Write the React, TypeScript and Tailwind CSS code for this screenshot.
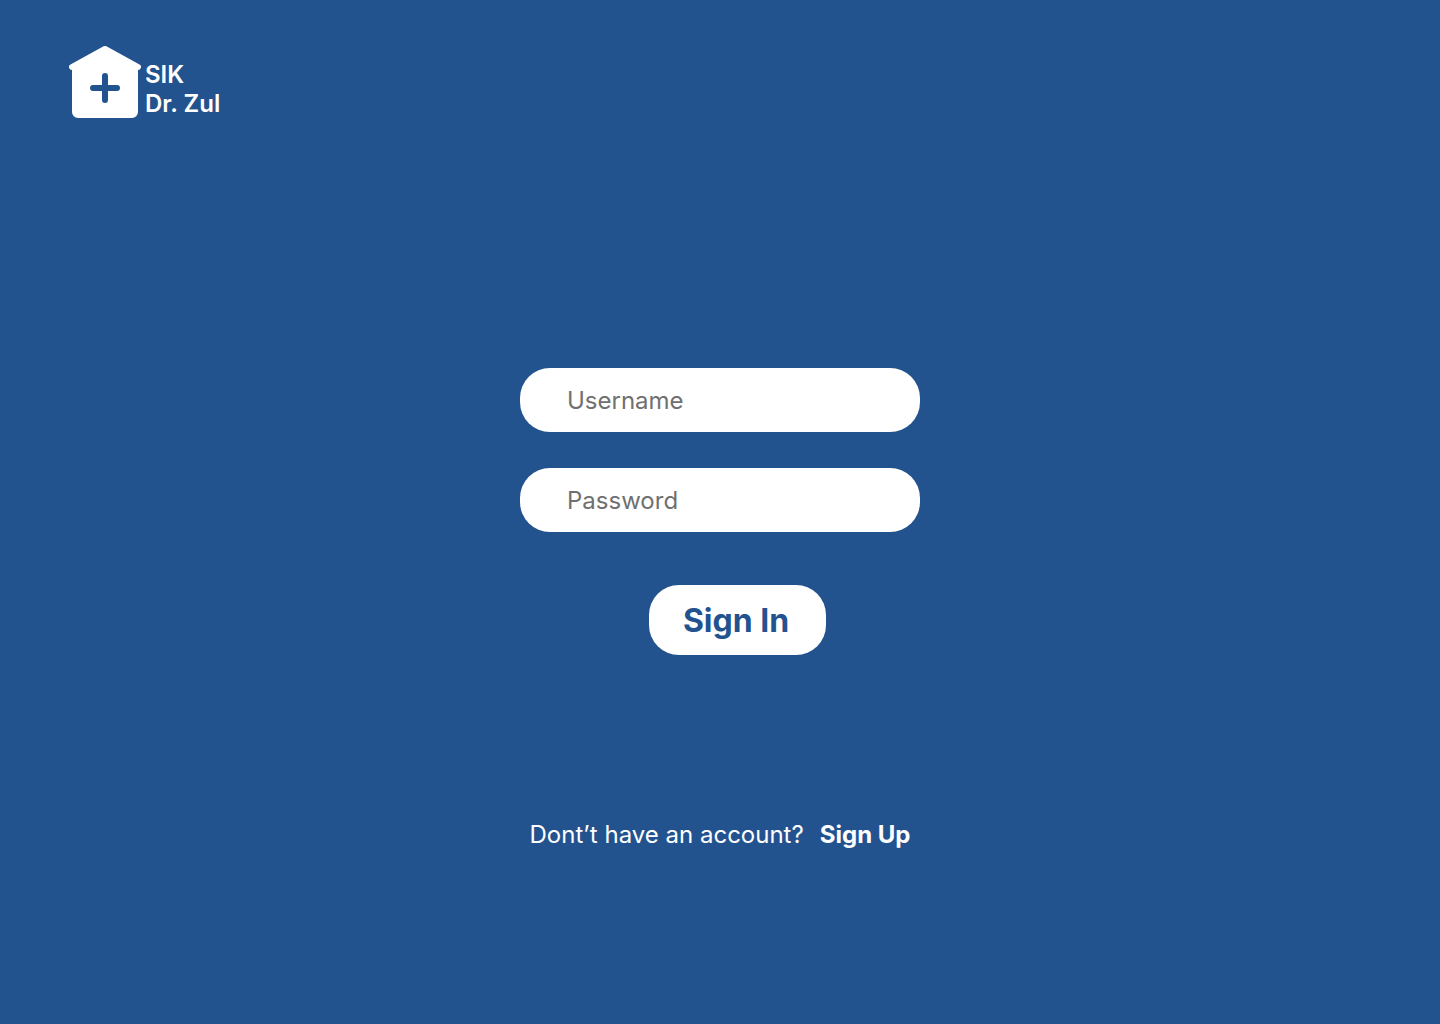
export default function App() {
  return (
    <div className="flex min-h-screen flex-col bg-[#23538f] font-['Inter',sans-serif] text-white">
      <header className="flex items-start gap-1 px-[69px] pt-[45px]">
        <svg width="72" height="74" viewBox="0 0 72 74" aria-hidden="true" className="shrink-0">
          <path
            d="M34.6 1.3a3 3 0 0 1 2.8 0L70.5 19.4A3 3 0 0 1 69 25V67a6 6 0 0 1-6 6H9a6 6 0 0 1-6-6V25A3 3 0 0 1 1.5 19.4Z"
            fill="#fff"
          />
          <path d="M36 31V55M24 43H48" stroke="#23538f" strokeWidth="6" strokeLinecap="round" />
        </svg>
        <p className="pt-[15px] text-2xl leading-[29px] font-semibold">
          SIK
          <br />
          Dr. Zul
        </p>
      </header>
      <main className="flex flex-col items-center pt-[249px]">
        <form className="flex w-full max-w-[400px] flex-col" onSubmit={(e) => e.preventDefault()}>
          <input
            type="text"
            aria-label="Username"
            placeholder="Username"
            className="h-16 w-full rounded-[30px] bg-white px-[47px] text-2xl text-black outline-none placeholder:text-[#707070] placeholder:opacity-100"
          />
          <input
            type="password"
            aria-label="Password"
            placeholder="Password"
            className="mt-9 h-16 w-full rounded-[30px] bg-white px-[47px] text-2xl text-black outline-none placeholder:text-[#707070] placeholder:opacity-100"
          />
          <button
            type="submit"
            className="mt-[53px] ml-[129px] h-[70px] w-[177px] rounded-[30px] bg-white pt-0.5 pr-[3px] text-[32px] font-bold text-[#23538f]"
          >
            Sign In
          </button>
        </form>
        <p className="mt-[165px] flex gap-4 text-2xl leading-[29px]">
          Dont’t have an account?
          <a href="#signup" className="font-bold">
            Sign Up
          </a>
        </p>
      </main>
    </div>
  );
}
